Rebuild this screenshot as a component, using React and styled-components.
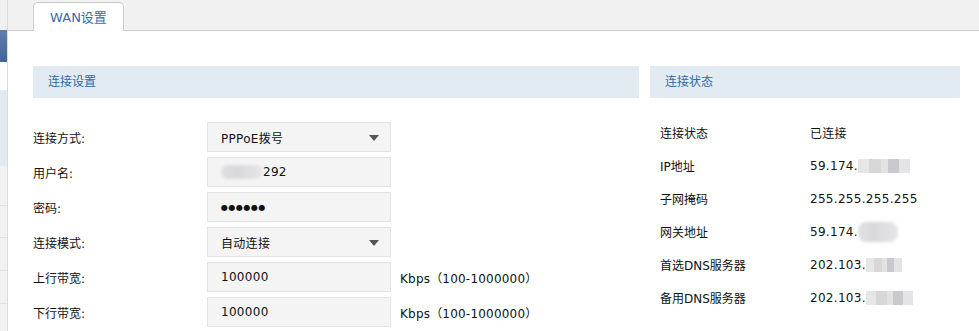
import React from 'react';
import styled, { createGlobalStyle } from 'styled-components';

const GlobalStyle = createGlobalStyle`
  html, body {
    margin: 0;
    padding: 0;
    background: #fff;
  }
  body {
    font-family: "DejaVu Sans", "Noto Sans CJK SC", sans-serif;
    font-size: 12px;
    color: #111;
  }
`;

const settings = [
  { label: '连接方式:', value: 'PPPoE拨号', select: true },
  { label: '用户名:', value: '292', blur: 42 },
  { label: '密码:', value: '●●●●●●', password: true },
  { label: '连接模式:', value: '自动连接', select: true },
  { label: '上行带宽:', value: '100000', unit: 'Kbps（100-1000000）' },
  { label: '下行带宽:', value: '100000', unit: 'Kbps（100-1000000）' },
];

const status = [
  { label: '连接状态', value: '已连接' },
  { label: 'IP地址', value: '59.174.', blur: 52 },
  { label: '子网掩码', value: '255.255.255.255' },
  { label: '网关地址', value: '59.174.', blur: 40, soft: true },
  { label: '首选DNS服务器', value: '202.103.', blur: 36 },
  { label: '备用DNS服务器', value: '202.103.', blur: 47 },
];

export default function App() {
  return (
    <>
      <GlobalStyle />
      <Page>
        <Sidebar>
          <SideBlock $h={30} $bg="#f0f0f0" />
          <SideBlock $h={32} $bg="linear-gradient(#5b7fad, #41669a)" />
          <SideBlock $h={28} $bg="#fff" />
          <SideBlock $h={76} $bg="#e3eaf1" />
          <SideBlock $h={40} $bg="#f1f1f3" $line />
          <SideBlock $h={32} $bg="#f1f1f3" $line />
          <SideBlock $h={33} $bg="#f1f1f3" $line />
          <SideBlock $h={33} $bg="#f1f1f3" $line />
          <SideBlock $h={27} $bg="#f1f1f3" />
        </Sidebar>
        <Main>
          <TabBar>
            <Tab>WAN设置</Tab>
          </TabBar>
          <Content>
            <Panel $w={606}>
              <PanelHeader>连接设置</PanelHeader>
              <Form>
                {settings.map((row) => (
                  <FormRow key={row.label}>
                    <Label>{row.label}</Label>
                    <Field $password={row.password}>
                      {row.blur && <Blur $w={row.blur} $soft />}
                      <span>{row.value}</span>
                      {row.select && <Arrow />}
                    </Field>
                    {row.unit && <Unit>{row.unit}</Unit>}
                  </FormRow>
                ))}
              </Form>
            </Panel>
            <Panel $w={310}>
              <PanelHeader>连接状态</PanelHeader>
              <StatusList>
                {status.map((row) => (
                  <StatusRow key={row.label}>
                    <StatusLabel>{row.label}</StatusLabel>
                    <StatusValue>
                      {row.value}
                      {row.blur && <Blur $w={row.blur} $soft={row.soft} $tall={row.soft} />}
                    </StatusValue>
                  </StatusRow>
                ))}
              </StatusList>
            </Panel>
          </Content>
        </Main>
      </Page>
    </>
  );
}

const Page = styled.div`
  display: flex;
  height: 331px;
  overflow: hidden;
`;

const Sidebar = styled.div`
  width: 7px;
  border-right: 1px solid #dcdcdc;
  display: flex;
  flex-direction: column;
`;

const SideBlock = styled.div`
  height: ${(p) => p.$h}px;
  flex-shrink: 0;
  background: ${(p) => p.$bg};
  border-bottom: ${(p) => (p.$line ? '1px solid #e2e2e2' : 'none')};
  box-sizing: border-box;
`;

const Main = styled.div`
  flex: 1;
  display: flex;
  flex-direction: column;
`;

const TabBar = styled.div`
  height: 30px;
  background: #f1f1f1;
  border-bottom: 1px solid #cccccc;
  padding-left: 25px;
  display: flex;
  align-items: flex-end;
`;

const Tab = styled.div`
  width: 91px;
  height: 29px;
  box-sizing: border-box;
  margin-bottom: -1px;
  background: #fff;
  border: 1px solid #cccccc;
  border-bottom: none;
  border-radius: 5px 5px 0 0;
  color: #3a6cab;
  font-size: 13px;
  display: flex;
  align-items: center;
  justify-content: center;
  padding-bottom: 1px;
`;

const Content = styled.div`
  display: flex;
  gap: 11px;
  padding: 35px 0 0 25px;
`;

const Panel = styled.div`
  width: ${(p) => p.$w}px;
  flex-shrink: 0;
`;

const PanelHeader = styled.div`
  height: 32px;
  line-height: 32px;
  background: #e2ebf2;
  color: #2f6aa6;
  padding-left: 15px;
  font-size: 12px;
`;

const Form = styled.div`
  padding-top: 24px;
  display: flex;
  flex-direction: column;
  gap: 5px;
`;

const FormRow = styled.div`
  display: flex;
  align-items: center;
  height: 30px;
`;

const Label = styled.div`
  width: 174px;
  color: #111;
`;

const Field = styled.div`
  position: relative;
  width: 184px;
  height: 30px;
  box-sizing: border-box;
  border: 1px solid #e3e3e3;
  background: #f4f4f4;
  padding-left: 13px;
  display: flex;
  align-items: center;
  color: #111;
  font-size: ${(p) => (p.$password ? '8px' : '12px')};
  letter-spacing: ${(p) => (p.$password ? '0.5px' : '0.3px')};
`;

const Arrow = styled.i`
  position: absolute;
  right: 11px;
  top: 12px;
  width: 0;
  height: 0;
  border-left: 5px solid transparent;
  border-right: 5px solid transparent;
  border-top: 6px solid #555;
`;

const Unit = styled.div`
  margin-left: 9px;
  color: #111;
  letter-spacing: 0.2px;
`;

const StatusList = styled.div`
  padding-top: 18px;
`;

const StatusRow = styled.div`
  display: flex;
  height: 33px;
  align-items: center;
`;

const StatusLabel = styled.div`
  width: 150px;
  padding-left: 10px;
  color: #111;
`;

const StatusValue = styled.div`
  display: flex;
  align-items: center;
  color: #111;
  letter-spacing: 0.3px;
`;

const Blur = styled.span`
  display: inline-block;
  width: ${(p) => p.$w}px;
  height: ${(p) => (p.$tall ? 20 : 14)}px;
  border-radius: ${(p) => (p.$soft ? '8px' : '0')};
  background: ${(p) =>
    p.$soft
      ? 'linear-gradient(90deg, #e0e0e2 0%, #d8d8da 40%, #e6e6e8 100%)'
      : 'linear-gradient(90deg, #e6e6e6 0 22%, #d7d7d7 22% 44%, #e2e2e2 44% 58%, #cacace 58% 78%, #e4e4e6 78%)'};
  filter: blur(${(p) => (p.$soft ? 1.5 : 0.4)}px);
`;
